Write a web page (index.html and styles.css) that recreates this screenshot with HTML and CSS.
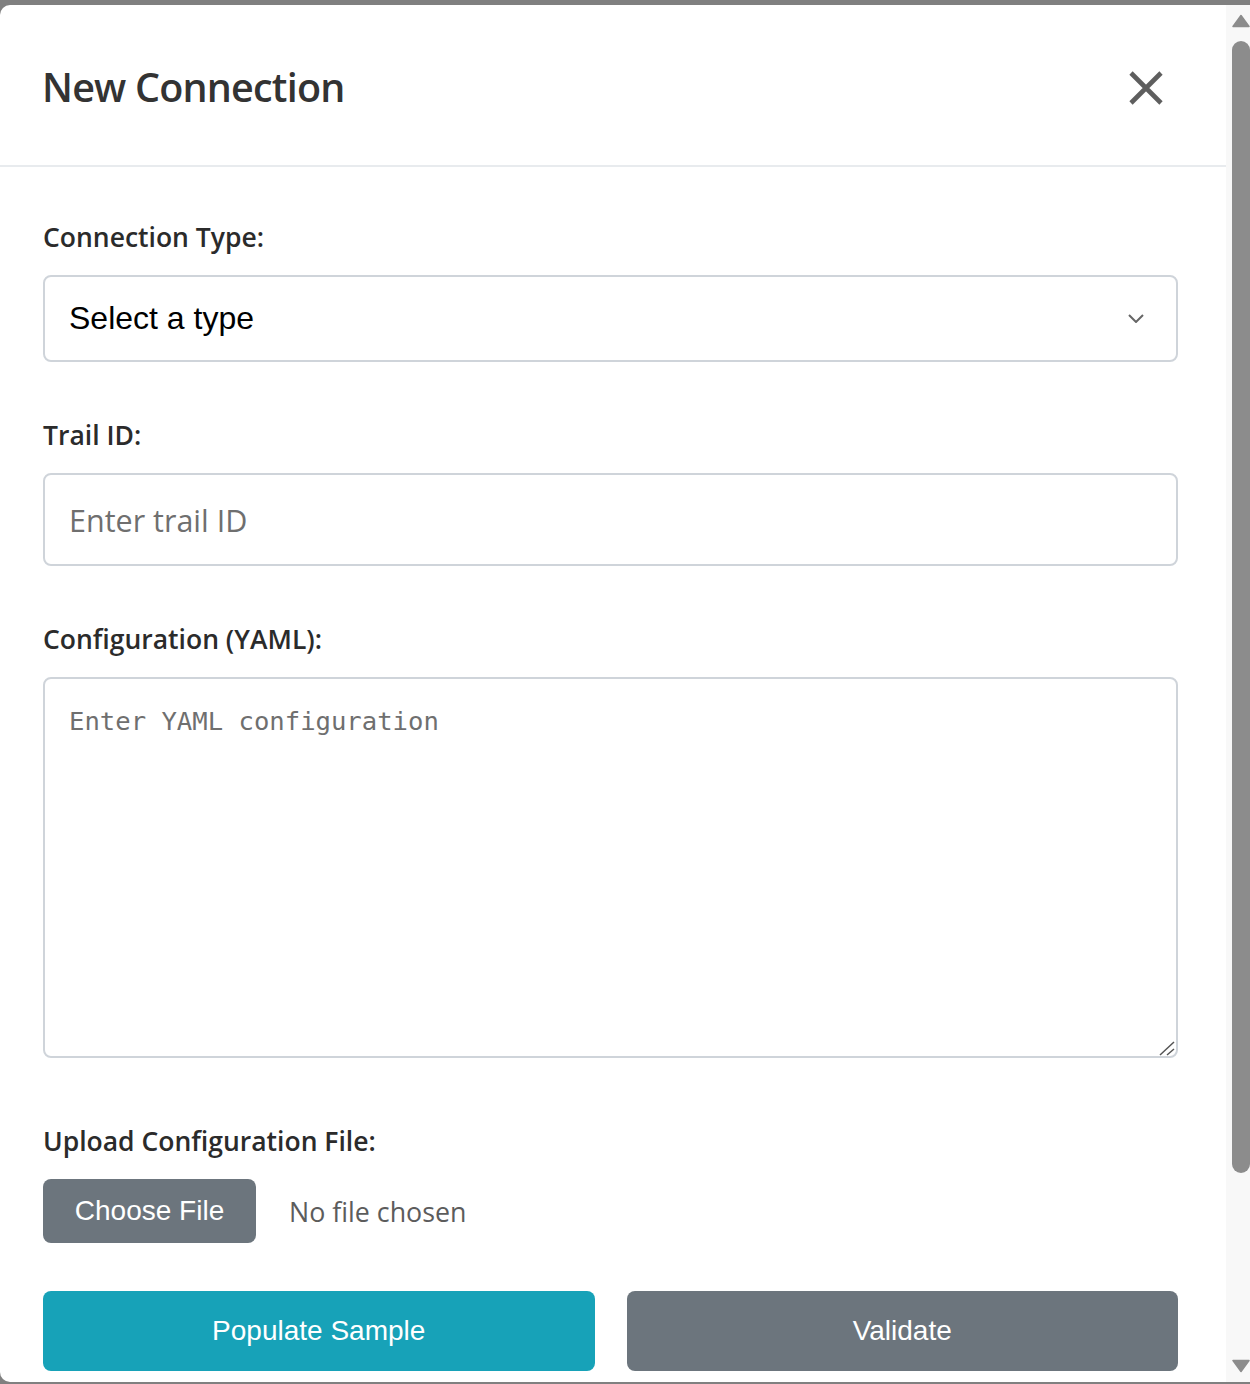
FILE: index.html
```html
<!DOCTYPE html>
<html lang="en">
<head>
<meta charset="utf-8">
<title>New Connection</title>
<link rel="stylesheet" href="styles.css">
</head>
<body>
<div class="modal">
  <div class="main">
    <header class="modal-header">
      <h1 class="title">New Connection</h1>
      <button class="close" type="button" aria-label="Close">
        <svg width="34" height="34" viewBox="0 0 34 34"><path d="M2 2 L32 32 M32 2 L2 32" stroke="#5e5e5e" stroke-width="4.6" fill="none"/></svg>
      </button>
    </header>
    <form class="modal-body">
      <div class="group g-select">
        <label class="label">Connection Type:</label>
        <div class="select" role="combobox">
          <span class="select-text">Select a type</span>
          <svg class="chev" width="16" height="9" viewBox="0 0 16 9"><path d="M1 1 L8 8 L15 1" stroke="#666" stroke-width="2" fill="none"/></svg>
        </div>
      </div>
      <div class="group g-input">
        <label class="label" for="trail">Trail ID:</label>
        <input id="trail" class="input" type="text" placeholder="Enter trail ID">
      </div>
      <div class="group g-text">
        <label class="label" for="yaml">Configuration (YAML):</label>
        <div class="ta-wrap">
          <textarea id="yaml" class="textarea" placeholder="Enter YAML configuration"></textarea>
          <svg class="resizer" width="16" height="16" viewBox="0 0 16 16"><path d="M15 2 L1 15 M15 9 L8 15" stroke="#555" stroke-width="1.5" fill="none"/></svg>
        </div>
      </div>
      <div class="group g-file">
        <label class="label">Upload Configuration File:</label>
        <div class="file-row">
          <span class="file-btn">Choose File</span>
          <span class="file-name">No file chosen</span>
        </div>
      </div>
      <div class="actions">
        <button type="button" class="btn btn-info">Populate Sample</button>
        <button type="button" class="btn btn-secondary">Validate</button>
      </div>
    </form>
  </div>
  <div class="scrollbar">
    <svg class="arrow" width="18" height="14" viewBox="0 0 18 14"><path d="M9 1.5 L17 12.5 L1 12.5 Z" fill="#8c8c8c" stroke="#8c8c8c" stroke-width="1.5" stroke-linejoin="round"/></svg>
    <div class="thumb"></div>
    <svg class="arrow arrow-down" width="18" height="14" viewBox="0 0 18 14"><path d="M1 1.5 L17 1.5 L9 12.5 Z" fill="#8c8c8c" stroke="#8c8c8c" stroke-width="1.5" stroke-linejoin="round"/></svg>
  </div>
</div>
</body>
</html>
```
FILE: styles.css
```css
html, body {
  margin: 0;
  padding: 0;
  background: #808080;
}
body {
  height: 1384px;
  overflow: hidden;
  padding-top: 5px;
  box-sizing: border-box;
}
.modal {
  display: flex;
  width: 1250px;
  height: 1377px;
  background: #fff;
  border-radius: 10px 0 0 10px;
  overflow: hidden;
}
.main {
  width: 1226px;
  flex: none;
}
.modal-header {
  height: 162px;
  box-sizing: border-box;
  border-bottom: 2px solid #e8ebee;
  display: flex;
  align-items: center;
  justify-content: space-between;
  padding: 0 63px 0 42px;
}
.title {
  margin: 0;
  padding-top: 3px;
  font-family: "Open Sans", "Noto Sans", sans-serif;
  font-size: 39.5px;
  font-weight: 600;
  letter-spacing: -0.8px;
  line-height: 48px;
  color: #333;
}
.close {
  background: none;
  border: 0;
  padding: 0;
  margin-top: 6px;
  width: 34px;
  height: 34px;
  display: block;
}
.close svg { display: block; }
.modal-body {
  margin: 0;
  padding: 52px 48px 0 43px;
}
.label {
  display: block;
  font-family: "Open Sans", "Noto Sans", sans-serif;
  font-weight: 600;
  font-size: 26.5px;
  line-height: 36px;
  color: #2b2b2b;
  margin-bottom: 20px;
}
.g-select, .g-input { margin-bottom: 55px; }
.g-text { margin-bottom: 65px; }
.g-file { margin-bottom: 48px; }
.select {
  height: 87px;
  box-sizing: border-box;
  border: 2px solid #cfd4da;
  border-radius: 8px;
  display: flex;
  align-items: center;
  justify-content: space-between;
  padding: 0 32px 0 24px;
}
.select-text {
  font-family: "Liberation Sans", Arial, sans-serif;
  font-size: 32px;
  color: #000;
}
.chev { display: block; }
.input {
  display: block;
  width: 100%;
  height: 93px;
  box-sizing: border-box;
  border: 2px solid #cfd4da;
  border-radius: 8px;
  padding: 0 24px;
  font-family: "Open Sans", "Noto Sans", sans-serif;
  font-size: 30.5px;
  color: #212529;
  outline: none;
  background: #fff;
}
.input::placeholder { color: #6f6f6f; opacity: 1; }
.ta-wrap { position: relative; }
.textarea {
  display: block;
  width: 100%;
  height: 381px;
  box-sizing: border-box;
  border: 2px solid #cfd4da;
  border-radius: 8px;
  padding: 27px 24px 0 24px;
  font-family: "DejaVu Sans Mono", "Liberation Mono", monospace;
  font-size: 25.6px;
  line-height: 30px;
  resize: none;
  outline: none;
  margin: 0;
}
.textarea::placeholder { color: #6f6f6f; opacity: 1; }
.resizer {
  position: absolute;
  right: 3px;
  bottom: 2px;
}
.file-row {
  display: flex;
  align-items: center;
  gap: 33px;
}
.file-btn {
  width: 213px;
  height: 64px;
  border-radius: 8px;
  background: #6c757d;
  color: #fff;
  display: flex;
  align-items: center;
  justify-content: center;
  font-family: "Liberation Sans", Arial, sans-serif;
  font-size: 28px;
}
.file-name {
  font-family: "Open Sans", "Noto Sans", sans-serif;
  font-size: 26.8px;
  color: #5c5c5c;
}
.actions {
  display: grid;
  grid-template-columns: 1fr 1fr;
  gap: 32px;
}
.btn {
  height: 80px;
  border: 0;
  border-radius: 8px;
  color: #fff;
  font-family: "Liberation Sans", Arial, sans-serif;
  font-size: 28px;
  padding: 0;
}
.btn-info { background: #17a2b8; }
.btn-secondary { background: #6c757d; }
.scrollbar {
  width: 24px;
  flex: none;
  background: #f8f8f8;
  display: flex;
  flex-direction: column;
  padding: 9px 0 9px 6px;
  box-sizing: border-box;
}
.arrow { display: block; flex: none; }
.thumb {
  width: 18px;
  height: 1132px;
  margin-top: 13px;
  border-radius: 9px;
  background: #8c8c8c;
  flex: none;
}
.arrow-down { margin-top: auto; }
```
